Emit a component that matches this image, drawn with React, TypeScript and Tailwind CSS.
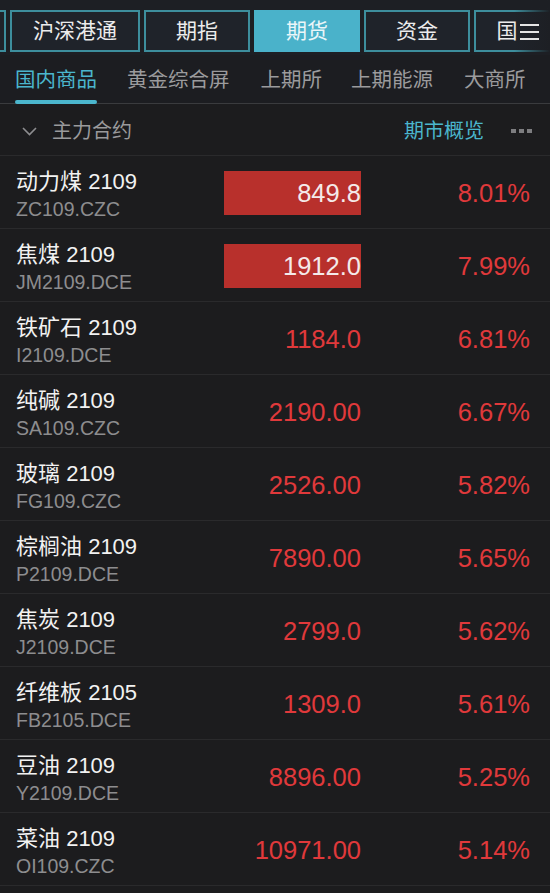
import React from 'react';

const font = { fontFamily: '"Liberation Sans", "Noto Sans CJK SC", sans-serif' };

const topTabs = [
    { label: '沪深港通', w: 'w-[130px]' },
    { label: '期指', w: 'w-[106px]' },
    { label: '期货', w: 'w-[106px]', active: true },
    { label: '资金', w: 'w-[106px]' },
    { label: '国', w: 'w-[106px]' },
];

const subTabs = ['国内商品', '黄金综合屏', '上期所', '上期能源', '大商所'];

const rows = [
    { name: '动力煤', month: '2109', code: 'ZC109.CZC', price: '849.8', pct: '8.01%', box: true },
    { name: '焦煤', month: '2109', code: 'JM2109.DCE', price: '1912.0', pct: '7.99%', box: true },
    { name: '铁矿石', month: '2109', code: 'I2109.DCE', price: '1184.0', pct: '6.81%' },
    { name: '纯碱', month: '2109', code: 'SA109.CZC', price: '2190.00', pct: '6.67%' },
    { name: '玻璃', month: '2109', code: 'FG109.CZC', price: '2526.00', pct: '5.82%' },
    { name: '棕榈油', month: '2109', code: 'P2109.DCE', price: '7890.00', pct: '5.65%' },
    { name: '焦炭', month: '2109', code: 'J2109.DCE', price: '2799.0', pct: '5.62%' },
    { name: '纤维板', month: '2105', code: 'FB2105.DCE', price: '1309.0', pct: '5.61%' },
    { name: '豆油', month: '2109', code: 'Y2109.DCE', price: '8896.00', pct: '5.25%' },
    { name: '菜油', month: '2109', code: 'OI109.CZC', price: '10971.00', pct: '5.14%' },
];

const App = () => {
    return (
        <div className="w-[550px] h-[893px] overflow-hidden bg-[#1c1c1e] text-white" style={font}>
            {/* top tab bar */}
            <div className="relative h-[55px] bg-[#1d1f24] pt-[10px] overflow-hidden">
                <div className="flex gap-[4px] ml-[-20px]">
                    <div className="w-[26px] h-[42px] shrink-0 border-2 border-[#3d8e9d] bg-[#1f232a]" />
                    {topTabs.map((t) => (
                        <div
                            key={t.label}
                            className={`${t.w} h-[42px] shrink-0 flex items-center justify-center text-[21px] border-2 ${
                                t.active
                                    ? 'bg-[#4ab2ca] border-[#4ab2ca] text-[#eaf6f9]'
                                    : 'bg-[#1f232a] border-[#3d8e9d] text-[#ececec]'
                            }`}
                        >
                            {t.label === '国' ? <span className="mr-[40px]">{t.label}</span> : t.label}
                        </div>
                    ))}
                </div>
                <div className="absolute top-0 right-0 h-full w-[36px] bg-gradient-to-r from-transparent to-[#1d1f24]" />
                <div className="absolute top-[24px] right-[11px] flex flex-col gap-[5px]">
                    <div className="w-[19px] h-[2px] bg-[#e5e5e5]" />
                    <div className="w-[19px] h-[2px] bg-[#e5e5e5]" />
                    <div className="w-[19px] h-[2px] bg-[#e5e5e5]" />
                </div>
            </div>

            {/* sub tabs */}
            <div className="h-[49px] flex items-stretch border-b border-[#3a3b3e] bg-[#1c1d21] pl-[15px] pt-[3px]">
                {subTabs.map((s, i) => (
                    <div
                        key={s}
                        className={`relative flex items-center text-[20.5px] ${
                            i === 0 ? 'text-[#4bb6cd]' : 'text-[#9b9b9d]'
                        } ${['mr-[30px]', 'mr-[31px]', 'mr-[29px]', 'mr-[31px]', ''][i]}`}
                    >
                        {s}
                        {i === 0 && <div className="absolute left-0 right-0 bottom-[-1px] h-[4px] rounded-sm bg-[#4bb6cd]" />}
                    </div>
                ))}
            </div>

            {/* section header */}
            <div className="h-[52px] flex items-center border-b border-[#2a2a2c] pl-[22px] pr-[18px] pt-[3px]">
                <svg width="15" height="9" viewBox="0 0 15 9" className="mr-[15px]">
                    <path d="M1 1 L7.5 7.5 L14 1" stroke="#8d8d90" strokeWidth="1.6" fill="none" />
                </svg>
                <span className="text-[20px] text-[#9a9a9c]">主力合约</span>
                <span className="ml-auto text-[20px] text-[#4bb6cd] mr-[27px]">期市概览</span>
                <div className="flex gap-[3px]">
                    <div className="w-[5px] h-[4px] bg-[#7d7d80]" />
                    <div className="w-[5px] h-[4px] bg-[#7d7d80]" />
                    <div className="w-[5px] h-[4px] bg-[#7d7d80]" />
                </div>
            </div>

            {/* rows */}
            {rows.map((r) => (
                <div key={r.code} className="h-[73px] flex items-center border-b border-[#2a2a2c] pl-[16px] pr-[20px]">
                    <div className="flex-1 flex flex-col pt-[4px]">
                        <div className="text-[22px] leading-[26px] text-[#f2f2f2]">
                            {r.name} {r.month}
                        </div>
                        <div className="text-[19.5px] leading-[22px] mt-[3px] text-[#8d8d8f]">{r.code}</div>
                    </div>
                    <div
                        className={`w-[137px] h-[44px] mt-[2px] flex items-center justify-end text-[25.5px] ${
                            r.box ? 'bg-[#b8302c] text-[#f4eaea]' : 'text-[#e0393b]'
                        }`}
                    >
                        {r.price}
                    </div>
                    <div className="w-[169px] mt-[2px] text-right text-[25.5px] text-[#e0393b]">{r.pct}</div>
                </div>
            ))}
        </div>
    );
};

export default App;
